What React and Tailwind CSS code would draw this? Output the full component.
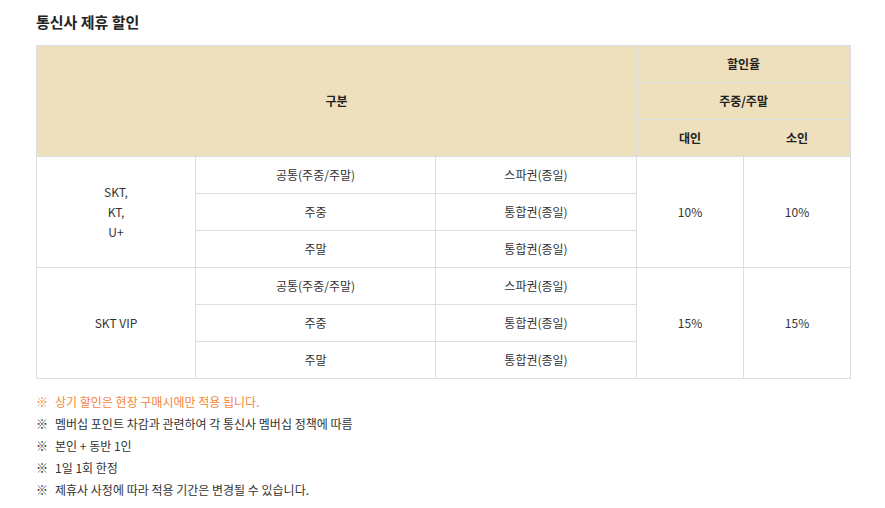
import React from "react";

const groups = [
  {
    name: ["SKT,", "KT,", "U+"],
    rate: "10%",
    rows: [
      ["공통(주중/주말)", "스파권(종일)"],
      ["주중", "통합권(종일)"],
      ["주말", "통합권(종일)"],
    ],
  },
  {
    name: ["SKT VIP"],
    rate: "15%",
    rows: [
      ["공통(주중/주말)", "스파권(종일)"],
      ["주중", "통합권(종일)"],
      ["주말", "통합권(종일)"],
    ],
  },
];

const notes = [
  { text: "상기 할인은 현장 구매시에만 적용 됩니다.", accent: true },
  { text: "멤버십 포인트 차감과 관련하여 각 통신사 멤버십 정책에 따름" },
  { text: "본인 + 동반 1인" },
  { text: "1일 1회 한정" },
  { text: "제휴사 사정에 따라 적용 기간은 변경될 수 있습니다." },
];

const th = "border border-[#dcdee3] bg-[#eedfbd] h-[37px] font-bold text-[12px] text-[#222] text-center";
const td = "border border-[#dcdee3] h-[37px] text-[12px] text-[#333] text-center";

export default function App() {
  return (
    <div
      className="w-[885px] h-[508px] bg-white pl-[36px] pt-[11px]"
      style={{ fontFamily: '"Noto Sans CJK KR", "Noto Sans", sans-serif' }}
    >
      {/* title */}
      <h2 className="text-[15px] font-bold text-[#222] leading-[22px]">통신사 제휴 할인</h2>

      {/* table */}
      <table className="mt-[12px] w-[814px] table-fixed border-collapse">
        <colgroup>
          <col className="w-[159px]" />
          <col className="w-[240px]" />
          <col className="w-[201px]" />
          <col className="w-[107px]" />
          <col className="w-[107px]" />
        </colgroup>
        <thead>
          <tr>
            <th className={th} colSpan={3} rowSpan={3}>구분</th>
            <th className={th} colSpan={2}>할인율</th>
          </tr>
          <tr>
            <th className={th} colSpan={2}>주중/주말</th>
          </tr>
          <tr>
            <th className={th}>대인</th>
            <th className={th}>소인</th>
          </tr>
        </thead>
        <tbody>
          {groups.map((g) =>
            g.rows.map((r, i) => (
              <tr key={g.rate + i}>
                {i === 0 && (
                  <td className={td + " leading-[20px]"} rowSpan={3}>
                    {g.name.map((n) => (
                      <div key={n}>{n}</div>
                    ))}
                  </td>
                )}
                <td className={td}>{r[0]}</td>
                <td className={td}>{r[1]}</td>
                {i === 0 && (
                  <>
                    <td className={td} rowSpan={3}>{g.rate}</td>
                    <td className={td} rowSpan={3}>{g.rate}</td>
                  </>
                )}
              </tr>
            ))
          )}
        </tbody>
      </table>

      {/* notes */}
      <ul className="mt-[12px] flex flex-col">
        {notes.map((n) => (
          <li
            key={n.text}
            className={
              "flex gap-[7px] text-[12px] leading-[22px] " +
              (n.accent ? "text-[#f5853a]" : "text-[#333]")
            }
          >
            <span>※</span>
            <span>{n.text}</span>
          </li>
        ))}
      </ul>
    </div>
  );
}
